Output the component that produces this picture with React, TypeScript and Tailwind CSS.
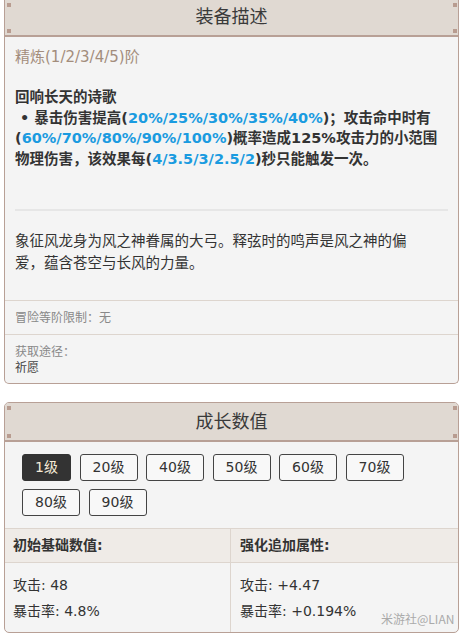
import React from "react";

const font = { fontFamily: '"DejaVu Sans", "Noto Sans CJK SC", sans-serif' };

function Corners() {
  return (
    <>
      <span className="absolute left-[2px] top-[3px] w-[4px] h-[4px] bg-[#b89c90]" />
      <span className="absolute left-[2px] bottom-[2px] w-[4px] h-[4px] bg-[#b89c90]" />
      <span className="absolute right-[1px] top-[3px] w-[4px] h-[4px] bg-[#b89c90]" />
      <span className="absolute right-[1px] bottom-[2px] w-[4px] h-[4px] bg-[#b89c90]" />
    </>
  );
}

function Blue({ children }: { children: React.ReactNode }) {
  return <span className="text-[#1a9be0]">{children}</span>;
}

export default function App() {
  const levels = ["1级", "20级", "40级", "50级", "60级", "70级", "80级", "90级"];
  return (
    <div className="w-[463px] h-[637px] bg-white relative overflow-hidden text-[#333]" style={font}>
      {/* Card 1 */}
      <div className="ml-[4px] w-[455px] border-x border-b border-[#b8a096] rounded-b-[5px] bg-[#f4f4f4] overflow-hidden">
        <div className="relative h-[37px] bg-[#e0d9d2] border-b-2 border-[#b8a096] flex items-center justify-center">
          <Corners />
          <span className="text-[18px] leading-[24px] text-[#3a3a3a] -mt-[2px]">装备描述</span>
        </div>
        <div className="px-[10px] pt-[9px] pb-[26px]">
          <div className="text-[15px] leading-[22px] text-[#a38d7c]">精炼(1/2/3/4/5)阶</div>
          <div className="mt-[19px] text-[14.5px] leading-[20.5px] font-bold text-[#333]">
            <div>回响长天的诗歌</div>
            <div>
              &nbsp;• 暴击伤害提高(<Blue>20%/25%/30%/35%/40%</Blue>)；攻击命中时有
              <br />(<Blue>60%/70%/80%/90%/100%</Blue>)概率造成125%攻击力的小范围
              <br />物理伤害，该效果每(<Blue>4/3.5/3/2.5/2</Blue>)秒只能触发一次。
            </div>
          </div>
          <div className="mt-[40px] h-[2px] bg-[#e6e6e6]" />
          <div className="mt-[20px] text-[14.5px] leading-[21.5px] text-[#333]">
            象征风龙身为风之神眷属的大弓。释弦时的鸣声是风之神的偏
            <br />爱，蕴含苍空与长风的力量。
          </div>
        </div>
        <div className="border-t border-[#ddd5ce] h-[34px] px-[10px] flex items-center text-[12px] text-[#888]">
          冒险等阶限制：无
        </div>
        <div className="border-t border-[#ddd5ce] px-[10px] pt-[9px] pb-[7px] text-[12px] leading-[16px]">
          <div className="text-[#888]">获取途径：</div>
          <div className="text-[#444]">祈愿</div>
        </div>
      </div>

      {/* Card 2 */}
      <div className="mt-[18px] ml-[4px] w-[455px] border border-[#b8a096] rounded-[5px] bg-[#f4f4f4] overflow-hidden">
        <div className="relative h-[39px] bg-[#e0d9d2] border-b-2 border-[#b8a096] flex items-center justify-center">
          <Corners />
          <span className="text-[18px] leading-[24px] text-[#3a3a3a]">成长数值</span>
        </div>
        <div className="pl-[17px] pr-[10px] pt-[12px] pb-[12px] flex flex-wrap gap-x-[8.5px] gap-y-[8px]">
          {levels.map((l, i) => (
            <div
              key={l}
              className={
                i === 0
                  ? "h-[27px] w-[49px] rounded-[3px] border border-[#333] bg-[#333] text-[#f6ecd8] text-[14px] flex items-center justify-center"
                  : "h-[27px] w-[58px] rounded-[3px] border border-[#444] bg-[#f8f8f8] text-[#333] text-[14px] flex items-center justify-center"
              }
            >
              {l}
            </div>
          ))}
        </div>
        <div className="grid grid-cols-[226px_1fr] border-t border-[#ddd5ce]">
          <div className="h-[34px] bg-[#efebe7] border-b border-r border-[#ddd5ce] pl-[8px] flex items-center text-[14px] font-bold">初始基础数值:</div>
          <div className="h-[34px] bg-[#efebe7] border-b border-[#ddd5ce] pl-[9px] flex items-center text-[14px] font-bold">强化追加属性:</div>
          <div className="border-r border-[#ddd5ce] pl-[8px] pt-[9px] pb-[8px] text-[14px] leading-[26px]">
            <div>攻击: 48</div>
            <div>暴击率: 4.8%</div>
          </div>
          <div className="pl-[9px] pt-[9px] pb-[8px] text-[14px] leading-[26px]">
            <div>攻击: +4.47</div>
            <div>暴击率: +0.194%</div>
          </div>
        </div>
      </div>

      <div
        className="absolute left-[381px] top-[611px] text-[12px] leading-[16px] text-[#aaa]"
        style={{ fontFamily: '"Noto Sans CJK SC", sans-serif' }}
      >
        米游社@LIAN
      </div>
    </div>
  );
}
